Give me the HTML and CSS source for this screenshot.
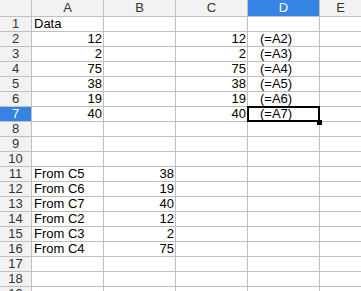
FILE: index.html
```html
<!DOCTYPE html>
<html lang="en">
<head>
    <meta charset="UTF-8">
    <title>Sheet</title>
    <link rel="stylesheet" href="styles.css">
</head>
<body>
    <div class="sheet">
        <!-- column headers -->
        <div class="corner"></div>
        <div class="col-head">A</div>
        <div class="col-head">B</div>
        <div class="col-head">C</div>
        <div class="col-head active">D</div>
        <div class="col-head">E</div>

        <div class="row-head">1</div>
        <div class="cell">Data</div><div class="cell"></div><div class="cell"></div><div class="cell"></div><div class="cell"></div>

        <div class="row-head">2</div>
        <div class="cell num">12</div><div class="cell"></div><div class="cell num">12</div><div class="cell ref">(=A2)</div><div class="cell"></div>

        <div class="row-head">3</div>
        <div class="cell num">2</div><div class="cell"></div><div class="cell num">2</div><div class="cell ref">(=A3)</div><div class="cell"></div>

        <div class="row-head">4</div>
        <div class="cell num">75</div><div class="cell"></div><div class="cell num">75</div><div class="cell ref">(=A4)</div><div class="cell"></div>

        <div class="row-head">5</div>
        <div class="cell num">38</div><div class="cell"></div><div class="cell num">38</div><div class="cell ref">(=A5)</div><div class="cell"></div>

        <div class="row-head">6</div>
        <div class="cell num">19</div><div class="cell"></div><div class="cell num">19</div><div class="cell ref">(=A6)</div><div class="cell"></div>

        <div class="row-head active">7</div>
        <div class="cell num">40</div><div class="cell"></div><div class="cell num">40</div><div class="cell ref selected">(=A7)</div><div class="cell"></div>

        <div class="row-head">8</div>
        <div class="cell"></div><div class="cell"></div><div class="cell"></div><div class="cell"></div><div class="cell"></div>

        <div class="row-head">9</div>
        <div class="cell"></div><div class="cell"></div><div class="cell"></div><div class="cell"></div><div class="cell"></div>

        <div class="row-head">10</div>
        <div class="cell"></div><div class="cell"></div><div class="cell"></div><div class="cell"></div><div class="cell"></div>

        <div class="row-head">11</div>
        <div class="cell">From C5</div><div class="cell num">38</div><div class="cell"></div><div class="cell"></div><div class="cell"></div>

        <div class="row-head">12</div>
        <div class="cell">From C6</div><div class="cell num">19</div><div class="cell"></div><div class="cell"></div><div class="cell"></div>

        <div class="row-head">13</div>
        <div class="cell">From C7</div><div class="cell num">40</div><div class="cell"></div><div class="cell"></div><div class="cell"></div>

        <div class="row-head">14</div>
        <div class="cell">From C2</div><div class="cell num">12</div><div class="cell"></div><div class="cell"></div><div class="cell"></div>

        <div class="row-head">15</div>
        <div class="cell">From C3</div><div class="cell num">2</div><div class="cell"></div><div class="cell"></div><div class="cell"></div>

        <div class="row-head">16</div>
        <div class="cell">From C4</div><div class="cell num">75</div><div class="cell"></div><div class="cell"></div><div class="cell"></div>

        <div class="row-head">17</div>
        <div class="cell"></div><div class="cell"></div><div class="cell"></div><div class="cell"></div><div class="cell"></div>

        <div class="row-head">18</div>
        <div class="cell"></div><div class="cell"></div><div class="cell"></div><div class="cell"></div><div class="cell"></div>

        <div class="row-head">19</div>
        <div class="cell"></div><div class="cell"></div><div class="cell"></div><div class="cell"></div><div class="cell"></div>
    </div>
</body>
</html>
```

FILE: styles.css
```css
html, body {
    margin: 0;
    padding: 0;
    width: 361px;
    height: 291px;
    overflow: hidden;
    background-color: #fff;
}
.sheet {
    display: grid;
    grid-template-columns: 31px 71px 71px 71px 71px 1fr;
    grid-template-rows: 16px;
    grid-auto-rows: 14px;
    gap: 1px;
    width: 361px;
    background-color: #c0c0c0;
    font-family: "Liberation Sans", Arial, sans-serif;
    font-size: 13px;
    line-height: 14px;
    color: #000;
}
.corner,
.col-head,
.row-head {
    background-color: #f2f2f2;
    color: #333;
    text-align: center;
}
.col-head {
    line-height: 16px;
}
.col-head.active,
.row-head.active {
    background-color: #3584e4;
    color: #fff;
}
.cell {
    background-color: #fff;
    padding: 0 2px;
    white-space: nowrap;
    overflow: visible;
}
.num {
    text-align: right;
    padding-right: 1px;
}
.ref {
    padding-left: 12px;
}
.selected {
    position: relative;
}
.selected::before {
    content: "";
    position: absolute;
    top: -1px;
    left: -1px;
    right: -1px;
    bottom: -1px;
    border: 2px solid #000;
}
.selected::after {
    content: "";
    position: absolute;
    right: -3px;
    bottom: -4px;
    width: 5px;
    height: 5px;
    background-color: #000;
    z-index: 1;
}
```
